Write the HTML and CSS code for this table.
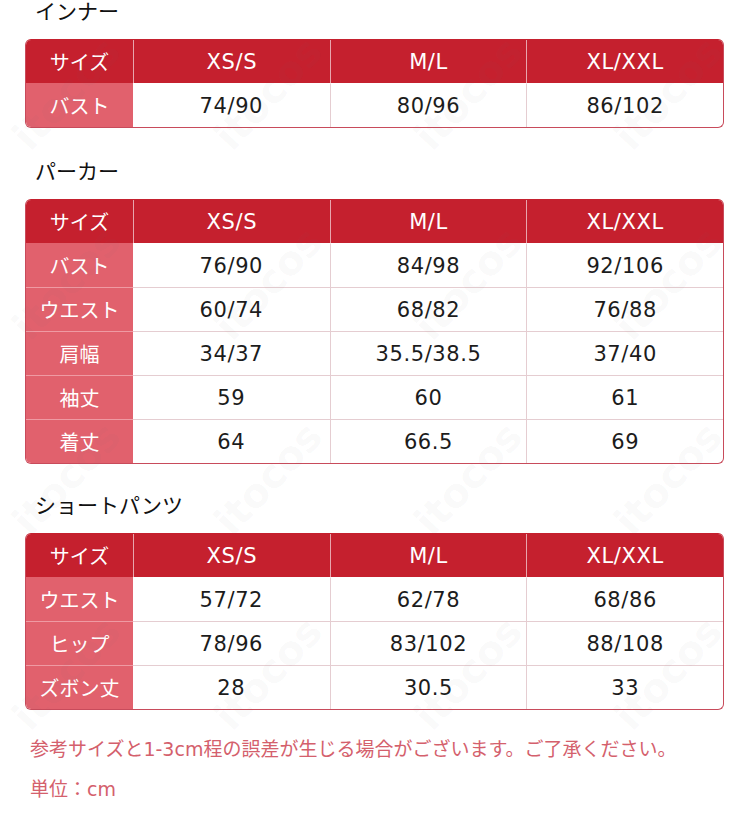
FILE: index.html
```html
<!DOCTYPE html>
<html lang="ja">
<head>
<meta charset="utf-8">
<title>サイズ表</title>
<link rel="stylesheet" href="styles.css">
</head>
<body>
<div class="page">
  <h2 class="title first">インナー</h2>
  <div class="tbl">
    <table>
      <colgroup><col class="c0"><col class="c1"><col class="c1"><col class="c1"></colgroup>
      <thead><tr><th class="lab">サイズ</th><th>XS/S</th><th>M/L</th><th>XL/XXL</th></tr></thead>
      <tbody>
        <tr><th class="lab">バスト</th><td>74/90</td><td>80/96</td><td>86/102</td></tr>
      </tbody>
    </table>
  </div>

  <h2 class="title">パーカー</h2>
  <div class="tbl">
    <table>
      <colgroup><col class="c0"><col class="c1"><col class="c1"><col class="c1"></colgroup>
      <thead><tr><th class="lab">サイズ</th><th>XS/S</th><th>M/L</th><th>XL/XXL</th></tr></thead>
      <tbody>
        <tr><th class="lab">バスト</th><td>76/90</td><td>84/98</td><td>92/106</td></tr>
        <tr><th class="lab">ウエスト</th><td>60/74</td><td>68/82</td><td>76/88</td></tr>
        <tr><th class="lab">肩幅</th><td>34/37</td><td>35.5/38.5</td><td>37/40</td></tr>
        <tr><th class="lab">袖丈</th><td>59</td><td>60</td><td>61</td></tr>
        <tr><th class="lab">着丈</th><td>64</td><td>66.5</td><td>69</td></tr>
      </tbody>
    </table>
  </div>

  <h2 class="title t3">ショートパンツ</h2>
  <div class="tbl">
    <table>
      <colgroup><col class="c0"><col class="c1"><col class="c1"><col class="c1"></colgroup>
      <thead><tr><th class="lab">サイズ</th><th>XS/S</th><th>M/L</th><th>XL/XXL</th></tr></thead>
      <tbody>
        <tr><th class="lab">ウエスト</th><td>57/72</td><td>62/78</td><td>68/86</td></tr>
        <tr><th class="lab">ヒップ</th><td>78/96</td><td>83/102</td><td>88/108</td></tr>
        <tr><th class="lab">ズボン丈</th><td>28</td><td>30.5</td><td>33</td></tr>
      </tbody>
    </table>
  </div>

  <div class="notes">
    <p>参考サイズと1-3cm程の誤差が生じる場合がございます。ご了承ください。</p>
    <p>単位：cm</p>
  </div>
</div>

<div class="wm" aria-hidden="true">
  <span class="mark m1">itocos</span><span class="mark m2">itocos</span><span class="mark m3">itocos</span><span class="mark m4">itocos</span>
  <span class="mark m5">itocos</span><span class="mark m6">itocos</span><span class="mark m7">itocos</span><span class="mark m8">itocos</span>
  <span class="mark m9">itocos</span><span class="mark m10">itocos</span><span class="mark m11">itocos</span><span class="mark m12">itocos</span>
  <span class="mark m13">itocos</span><span class="mark m14">itocos</span><span class="mark m15">itocos</span><span class="mark m16">itocos</span>
</div>
</body>
</html>
```

FILE: styles.css
```css
html, body {
  margin: 0;
  padding: 0;
  background: #ffffff;
}
body {
  width: 750px;
  height: 830px;
  overflow: hidden;
  position: relative;
  font-family: "DejaVu Sans", "Noto Sans CJK JP", sans-serif;
  color: #1a1a1a;
}
.page {
  padding: 0 26px 0 25px;
}
.title {
  margin: 30px 0 17px 10px;
  font-family: "Noto Sans CJK JP", sans-serif;
  font-weight: 400;
  font-size: 21px;
  line-height: 24px;
  color: #111;
}
.title.first {
  margin-top: -2px;
}
.title.t3 {
  margin-top: 28px;
}
.tbl {
  border: 1px solid #c84b5b;
  border-top-color: #c5202e;
  border-radius: 6px;
  overflow: hidden;
}
table {
  width: 100%;
  border-collapse: separate;
  border-spacing: 0;
  table-layout: fixed;
}
col.c0 { width: 107px; }
th, td {
  padding: 0;
  text-align: center;
  vertical-align: middle;
  font-weight: 400;
  font-size: 21px;
  letter-spacing: 0.6px;
}
thead th {
  height: 43px;
  background: #c5202e;
  color: #fff;
  border-left: 1px solid #e8a6ad;
}
thead th:first-child { border-left: none; }
tbody th.lab {
  background: #e1616d;
  color: #fff;
  border-top: 1px solid #ef9aa3;
  height: 43px;
}
tbody tr:first-child th.lab { border-top-color: #e1616d; }
.lab {
  font-family: "Noto Sans CJK JP", sans-serif;
  font-size: 20px;
  letter-spacing: 0;
}
thead th.lab { font-size: 20px; letter-spacing: 0; }
tbody td {
  height: 43px;
  border-top: 1px solid #e5cdd1;
  border-left: 1px solid #e5cdd1;
  color: #1c1c1c;
  background: transparent;
}
tbody tr:first-child td { border-top-color: #fff; }
tbody tr td:nth-child(2) { border-left: none; }
.notes {
  margin: 19px 0 0 5px;
  color: #d4606c;
  font-family: "DejaVu Sans", "Noto Sans CJK JP", sans-serif;
  font-size: 19px;
}
.notes p {
  margin: 0;
  line-height: 40px;
}
.wm {
  position: absolute;
  inset: 0;
  pointer-events: none;
  overflow: hidden;
}
.mark {
  position: absolute;
  font-family: "DejaVu Sans", sans-serif;
  font-weight: 700;
  font-size: 40px;
  color: rgba(120, 120, 120, 0.045);
  transform: rotate(-47deg);
  transform-origin: left center;
  white-space: nowrap;
}
.m1 { left: 20px; top: 120px; }
.m2 { left: 222px; top: 120px; }
.m3 { left: 422px; top: 120px; }
.m4 { left: 622px; top: 120px; }
.m5 { left: 20px; top: 310px; }
.m6 { left: 222px; top: 310px; }
.m7 { left: 422px; top: 310px; }
.m8 { left: 622px; top: 310px; }
.m9 { left: 20px; top: 505px; }
.m10 { left: 222px; top: 505px; }
.m11 { left: 422px; top: 505px; }
.m12 { left: 622px; top: 505px; }
.m13 { left: 20px; top: 700px; }
.m14 { left: 222px; top: 700px; }
.m15 { left: 422px; top: 700px; }
.m16 { left: 622px; top: 700px; }
```
